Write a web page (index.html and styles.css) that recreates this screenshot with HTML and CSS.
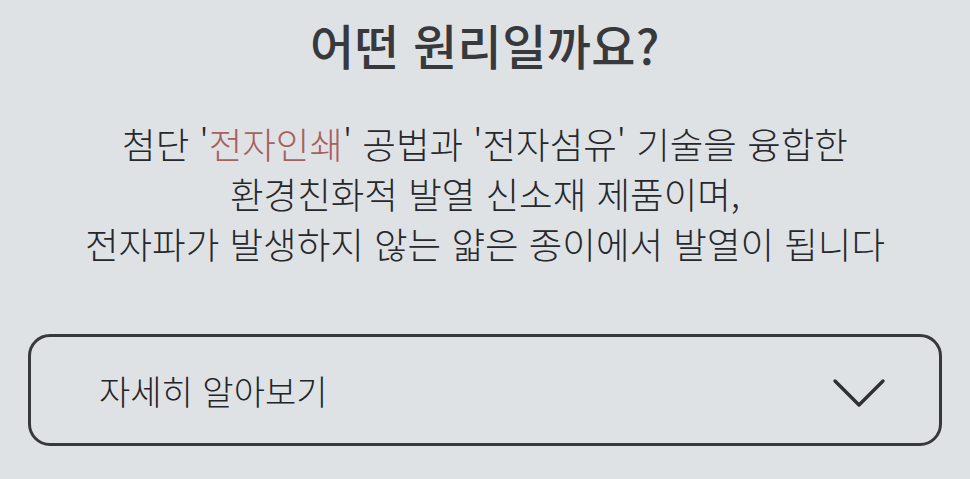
FILE: index.html
```html
<!DOCTYPE html>
<html lang="ko">
<head>
<meta charset="utf-8">
<link rel="stylesheet" href="styles.css">
</head>
<body>
<main class="page">
  <h1 class="title">어떤 원리일까요?</h1>
  <p class="desc">첨단 '<span class="accent">전자인쇄</span>' 공법과 '전자섬유' 기술을 융합한<br>환경친화적 발열 신소재 제품이며,<br>전자파가 발생하지 않는 얇은 종이에서 발열이 됩니다</p>
  <button class="more" type="button">
    <span class="more-label">자세히 알아보기</span>
    <svg class="chevron" width="54" height="30" viewBox="0 0 54 30"><path d="M3 3 L27 27 L51 3" fill="none" stroke="#2e3033" stroke-width="3.4" stroke-linecap="round" stroke-linejoin="round"/></svg>
  </button>
</main>
</body>
</html>
```
FILE: styles.css
```css
html, body {
  margin: 0;
  padding: 0;
  background: #dfe2e5;
}
body {
  font-family: "Noto Sans CJK KR", "Noto Sans", sans-serif;
  color: #333538;
  width: 970px;
  height: 479px;
  overflow: hidden;
}
.page {
  display: flex;
  flex-direction: column;
  align-items: center;
  padding: 12px 28px 0 28px;
}
.title {
  margin: 0;
  font-size: 48px;
  font-weight: 500;
  line-height: 64px;
  color: #37393c;
  letter-spacing: 0.4px;
}
.desc {
  margin: 43px 0 0 0;
  font-size: 36.5px;
  font-weight: 300;
  line-height: 50px;
  text-align: center;
  color: #26282b;
  letter-spacing: 0;
}
.accent {
  color: #a6605e;
}
.more {
  margin-top: 65px;
  align-self: stretch;
  height: 112px;
  box-sizing: border-box;
  border: 3px solid #38393c;
  border-radius: 22px;
  background: transparent;
  display: flex;
  align-items: center;
  justify-content: space-between;
  padding: 0 53px 0 68px;
  font-family: inherit;
  cursor: pointer;
}
.more-label {
  font-size: 34px;
  font-weight: 300;
  color: #222427;
  letter-spacing: 0;
}
.chevron {
  display: block;
  margin-top: 6px;
}
```
